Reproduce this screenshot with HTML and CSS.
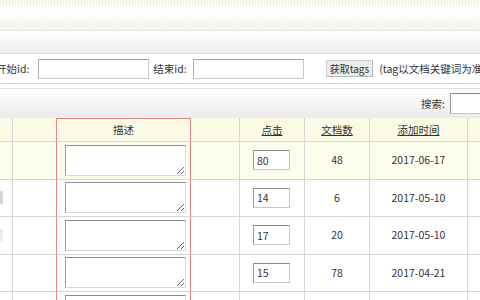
FILE: index.html
```html
<!DOCTYPE html>
<html lang="zh-CN">
<head>
    <meta charset="UTF-8">
    <title>文档关键词维护</title>
    <link rel="stylesheet" href="styles.css">
</head>
<body>
    <div class="topbar"></div>
    <div class="subbar"></div>
    <div class="toolbar">
        <label class="lbl-start">开始id:</label>
        <input type="text" class="idbox">
        <label class="lbl-end">结束id:</label>
        <input type="text" class="idbox">
        <button class="btn-tags">获取tags</button>
        <span class="note">(tag以文档关键词为准</span>
    </div>
    <div class="searchbar">
        <label>搜索:</label>
        <input type="text" class="search">
    </div>

    <table class="list">
        <colgroup>
            <col class="w-sel">
            <col class="w-tag">
            <col class="w-desc">
            <col class="w-blank">
            <col class="w-hit">
            <col class="w-num">
            <col class="w-date">
            <col class="w-op">
        </colgroup>
        <tr class="head">
            <th></th>
            <th class="left-red"></th>
            <th class="desc">描述</th>
            <th></th>
            <th><a href="#">点击</a></th>
            <th><a href="#">文档数</a></th>
            <th><a href="#">添加时间</a></th>
            <th></th>
        </tr>
        <tr class="hl">
            <td></td>
            <td class="left-red"></td>
            <td class="desc"><textarea></textarea></td>
            <td></td>
            <td class="hit"><input type="text" value="80"></td>
            <td>48</td>
            <td>2017-06-17</td>
            <td></td>
        </tr>
        <tr>
            <td><span class="stub"></span></td>
            <td class="left-red"></td>
            <td class="desc"><textarea></textarea></td>
            <td></td>
            <td class="hit"><input type="text" value="14"></td>
            <td>6</td>
            <td>2017-05-10</td>
            <td></td>
        </tr>
        <tr>
            <td><span class="stub faint"></span></td>
            <td class="left-red"></td>
            <td class="desc"><textarea></textarea></td>
            <td></td>
            <td class="hit"><input type="text" value="17"></td>
            <td>20</td>
            <td>2017-05-10</td>
            <td></td>
        </tr>
        <tr>
            <td></td>
            <td class="left-red"></td>
            <td class="desc"><textarea></textarea></td>
            <td></td>
            <td class="hit"><input type="text" value="15"></td>
            <td>78</td>
            <td>2017-04-21</td>
            <td></td>
        </tr>
        <tr>
            <td></td>
            <td class="left-red"></td>
            <td class="desc"><textarea></textarea></td>
            <td></td>
            <td class="hit"><input type="text" value=""></td>
            <td></td>
            <td></td>
            <td></td>
        </tr>
    </table>
</body>
</html>
```

FILE: styles.css
```css
body {
    margin: 0;
    width: 480px;
    height: 300px;
    overflow: hidden;
    background: #fff;
    font-family: "Noto Sans CJK SC", "DejaVu Sans", sans-serif;
    font-size: 10.5px;
    color: #333;
}

/* bandeau du haut avec les bandes pointillees */
.topbar {
    height: 30px;
    border-bottom: 1px solid #e2e2e2;
    background:
        repeating-linear-gradient(90deg, #efeedd 0 1px, transparent 1px 3px) 0 0 / 100% 5px no-repeat,
        repeating-linear-gradient(90deg, #efeedd 0 1px, transparent 1px 3px) 0 21px / 100% 6px no-repeat,
        linear-gradient(#fbfbf7, #fff 40%, #f6f6f2);
}
.subbar {
    height: 22px;
    border-bottom: 1px solid #dcdcdc;
    background: linear-gradient(#fff, #ededed);
}

.toolbar {
    height: 29px;
    display: flex;
    align-items: center;
    border-bottom: 1px solid #d8d8d8;
    white-space: nowrap;
}
.toolbar label {
    line-height: 12px;
}
.lbl-start {
    margin-left: -4px;
    margin-right: 9px;
}
.lbl-end {
    margin-left: 4px;
    margin-right: 6px;
}
.idbox {
    box-sizing: border-box;
    width: 111px;
    height: 20px;
    margin: 0;
    border: 1px solid #c8c8c8;
    border-top-color: #a0a0a0;
    border-left-color: #b0b0b0;
    background: #fff;
}
.btn-tags {
    box-sizing: border-box;
    height: 17px;
    margin-left: 22px;
    padding: 0 3px;
    border: 1px solid #cfcfcf;
    border-right-color: #b8b8b8;
    border-bottom-color: #b8b8b8;
    background: #ececec;
    font-family: inherit;
    font-size: 10px;
    line-height: 14px;
    color: #333;
}
.note {
    margin-left: 6px;
    line-height: 12px;
}

.searchbar {
    margin-top: 4px;
    height: 29px;
    border-top: 1px solid #e0e0e0;
    background: linear-gradient(#fff, #ebebeb);
    display: flex;
    align-items: center;
    justify-content: flex-end;
}
.searchbar label {
    margin-right: 5px;
    line-height: 12px;
}
.search {
    box-sizing: border-box;
    width: 34px;
    height: 21px;
    margin: 0 -4px 0 0;
    border: 1px solid #c8c8c8;
    border-top-color: #8a8a8a;
    border-left-color: #9a9a9a;
}

/* tableau */
.list {
    border-collapse: separate;
    border-spacing: 0;
    table-layout: fixed;
    width: 534px;
}
.w-sel { width: 13px; }
.w-tag { width: 44px; }
.w-desc { width: 134px; }
.w-blank { width: 49px; }
.w-hit { width: 65px; }
.w-num { width: 65px; }
.w-date { width: 98px; }
.w-op { width: 66px; }

.list th, .list td {
    padding: 0;
    border-right: 1px solid #d6d6d6;
    border-bottom: 1px solid #d6d6d6;
    text-align: center;
    vertical-align: middle;
    line-height: 12px;
}
.list th {
    height: 22px;
    font-weight: normal;
    background: #fbfbe5;
}
.list th a {
    color: #333;
    text-decoration: underline;
}
.list td {
    height: 36.5px;
}
.list tr.hl td {
    background: #fdfdee;
}

.list .left-red {
    border-right-color: #e08585;
}
.list .desc {
    border-right-color: #e08585;
    text-align: left;
}
.list th.desc {
    text-align: center;
    border-top: 1px solid #e08585;
}

.desc textarea {
    display: block;
    box-sizing: border-box;
    width: 121px;
    height: 31px;
    margin: 0 0 0 8px;
    border: 1px solid #d8d8d8;
    border-top-color: #8c8c8c;
    border-left-color: #9a9a9a;
    background: #fff;
}

.hit {
    text-align: left;
}
.hit input {
    display: block;
    box-sizing: border-box;
    width: 37px;
    height: 20px;
    margin: 0 0 0 13px;
    padding: 0 3px;
    border: 1px solid #c8c8c8;
    border-top-color: #8a8a8a;
    border-left-color: #9a9a9a;
    font-family: inherit;
    font-size: 10.5px;
    color: #333;
}

.stub {
    display: block;
    width: 3px;
    height: 13px;
    background: #d4d4d4;
}
.stub.faint {
    background: #ececec;
}
```
